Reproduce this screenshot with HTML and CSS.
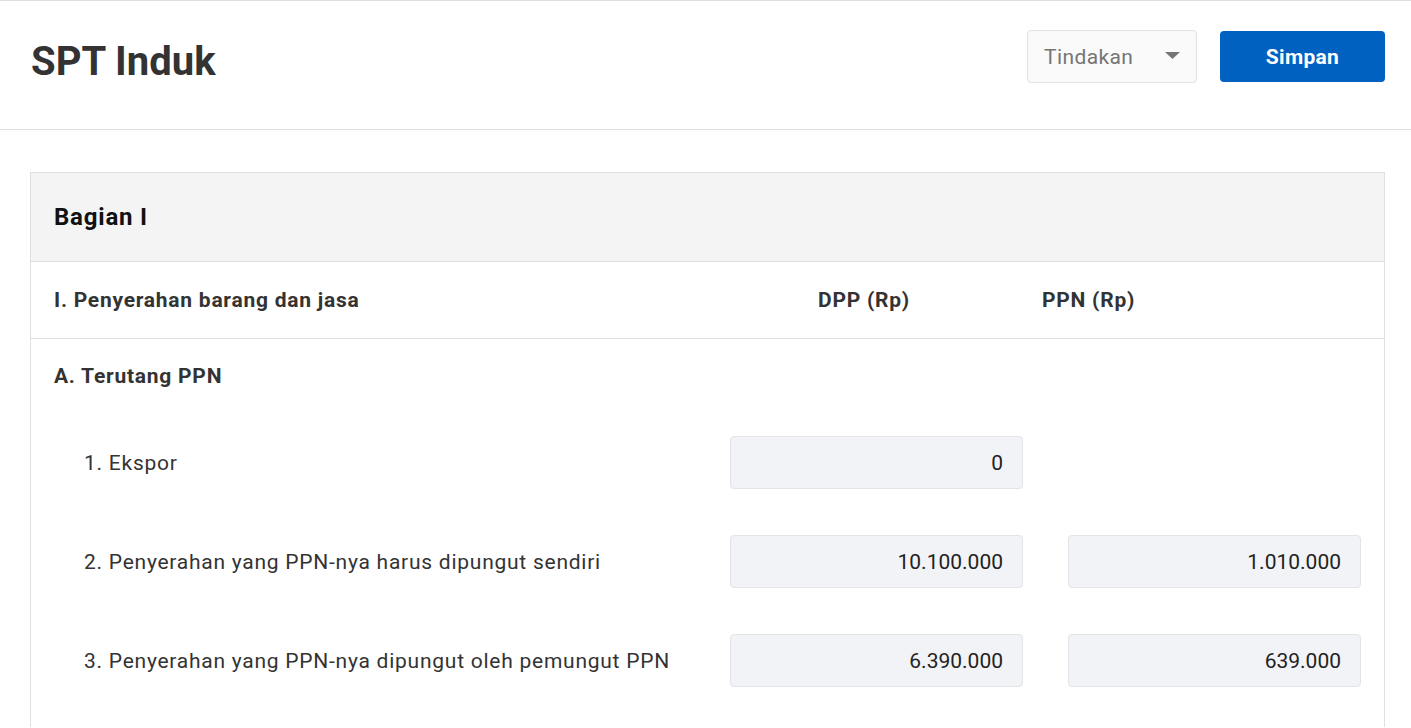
FILE: index.html
```html
<!DOCTYPE html>
<html lang="id">
<head>
    <meta charset="UTF-8">
    <meta name="viewport" content="width=device-width, initial-scale=1.0">
    <title>SPT Induk</title>
    <link rel="stylesheet" href="styles.css">
</head>
<body>
    <header class="topbar">
        <h1 class="title">SPT Induk</h1>
        <div class="actions">
            <div class="select">
                <span>Tindakan</span>
                <svg class="caret" width="15" height="7" viewBox="0 0 15 7"><path d="M0 0h15L7.5 7z" fill="#757575"/></svg>
            </div>
            <button class="btn-primary">Simpan</button>
        </div>
    </header>

    <main class="content">
        <section class="card">
            <div class="card-head">Bagian I</div>

            <div class="cols">
                <div>I. Penyerahan barang dan jasa</div>
                <div>DPP (Rp)</div>
                <div>PPN (Rp)</div>
            </div>

            <div class="group">
                <div class="group-title">A. Terutang PPN</div>

                <div class="items">
                    <div class="item">
                        <div class="label">1. Ekspor</div>
                        <div class="field">0</div>
                        <div></div>
                    </div>
                    <div class="item">
                        <div class="label">2. Penyerahan yang PPN-nya harus dipungut sendiri</div>
                        <div class="field">10.100.000</div>
                        <div class="field">1.010.000</div>
                    </div>
                    <div class="item">
                        <div class="label">3. Penyerahan yang PPN-nya dipungut oleh pemungut PPN</div>
                        <div class="field">6.390.000</div>
                        <div class="field">639.000</div>
                    </div>
                </div>
            </div>
        </section>
    </main>
</body>
</html>
```

FILE: styles.css
```css
* {
    margin: 0;
    padding: 0;
    box-sizing: border-box;
}

body {
    font-family: Roboto, "Liberation Sans", sans-serif;
    color: #333;
    background: #fff;
    border-top: 1px solid #dedede;
}

.topbar {
    display: flex;
    justify-content: space-between;
    align-items: center;
    height: 129px;
    padding: 0 26px 17px 31px;
    border-bottom: 1px solid #e0e0e0;
}

.title {
    font-size: 40px;
    font-weight: 700;
    color: #333;
    padding-top: 10px;
}

.actions {
    display: flex;
    align-items: center;
    gap: 23px;
}

.select {
    width: 170px;
    height: 53px;
    display: flex;
    align-items: center;
    justify-content: space-between;
    padding: 0 16px;
    background: #fafafa;
    border: 1px solid #e2e2e2;
    border-radius: 4px;
    font-size: 21px;
    color: #757575;
    letter-spacing: 0.4px;
}

.caret {
    margin-top: -2px;
}

.btn-primary {
    width: 165px;
    height: 51px;
    border: none;
    border-radius: 4px;
    background: #0061c1;
    color: #fff;
    font-family: inherit;
    font-size: 21px;
    font-weight: 700;
    letter-spacing: 0.3px;
}

.content {
    padding: 42px 26px 0 30px;
}

.card {
    border: 1px solid #e0e0e0;
    border-bottom: none;
}

.card-head {
    height: 89px;
    display: flex;
    align-items: center;
    padding: 0 23px;
    background: #f4f4f4;
    border-bottom: 1px solid #e0e0e0;
    font-size: 24px;
    font-weight: 700;
    color: #111;
    letter-spacing: 0.8px;
}

.cols {
    height: 77px;
    display: grid;
    grid-template-columns: 764px 224px 1fr;
    align-items: center;
    padding: 0 23px;
    border-bottom: 1px solid #e0e0e0;
    font-size: 21px;
    font-weight: 700;
    letter-spacing: 0.75px;
}

.group {
    padding: 23px 23px 40px;
}

.group-title {
    font-size: 21px;
    font-weight: 700;
    line-height: 28px;
    letter-spacing: 0.75px;
}

.items {
    display: flex;
    flex-direction: column;
    gap: 46px;
    margin-top: 46px;
}

.item {
    display: grid;
    grid-template-columns: 1fr 293px 293px;
    column-gap: 45px;
    align-items: center;
    padding-left: 30px;
}

.label {
    font-size: 21px;
    letter-spacing: 0.75px;
    color: #333;
}

.field {
    height: 53px;
    display: flex;
    align-items: center;
    justify-content: flex-end;
    padding: 0 19px;
    background: #f2f3f7;
    border: 1px solid #e3e4e8;
    border-radius: 4px;
    font-size: 21px;
    color: #222;
}
```
